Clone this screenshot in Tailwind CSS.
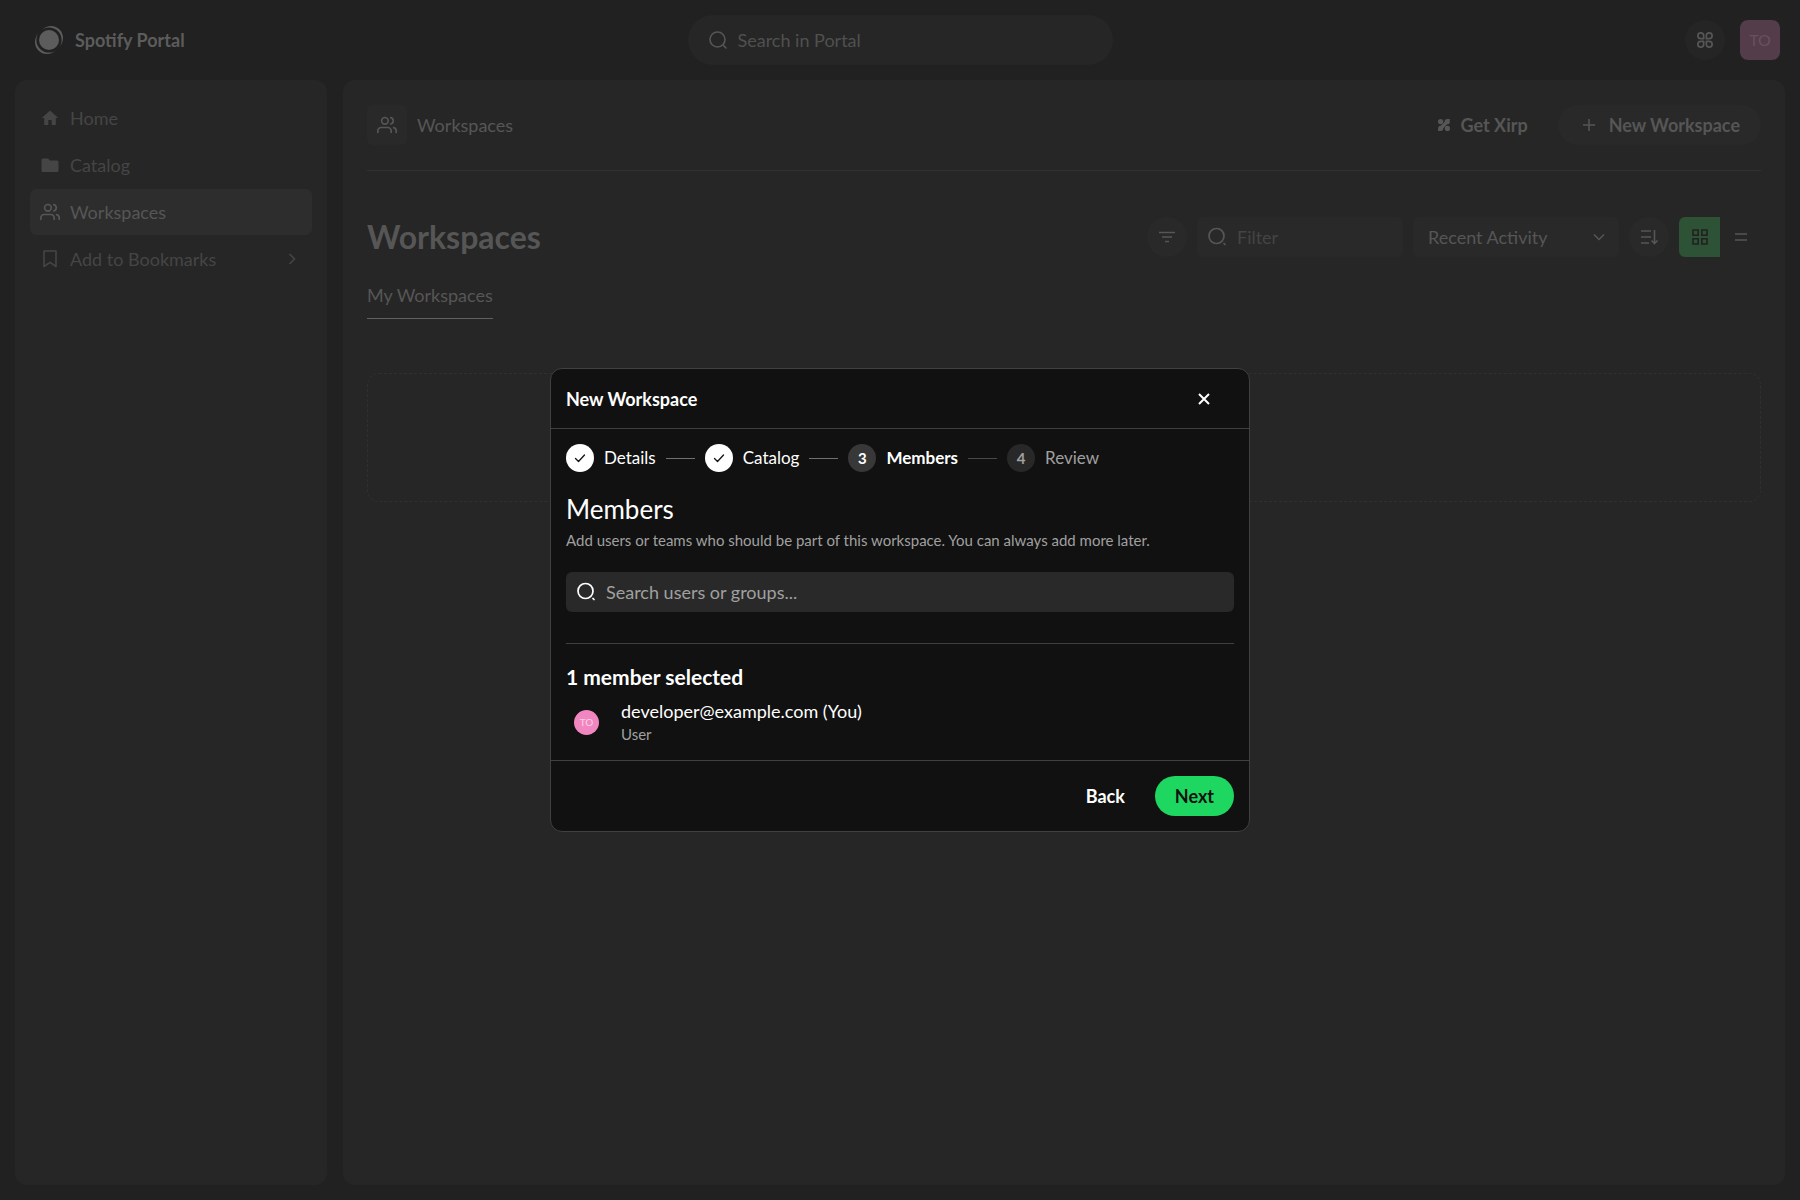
<!DOCTYPE html>
<html lang="en">
<head>
<meta charset="utf-8">
<meta name="viewport" content="width=device-width, initial-scale=1">
<title>Workspaces</title>
<script src="https://cdn.jsdelivr.net/npm/@tailwindcss/browser@4"></script>
</head>
<body class="flex min-h-screen flex-col bg-[#212121] font-['Lato',sans-serif] text-lg leading-6 text-[#565656]">
<svg class="hidden">
  <symbol id="users" viewBox="0 0 24 24" fill="none" stroke="currentColor" stroke-width="2" stroke-linecap="round" stroke-linejoin="round"><path d="M17 21v-2a4 4 0 0 0-4-4H5a4 4 0 0 0-4 4v2"/><circle cx="9.500" cy="7" r="4"/><path d="M23 21v-2a4 4 0 0 0-3-3.870M16.500 3.130a4 4 0 0 1 0 7.750"/></symbol>
  <symbol id="search" viewBox="0 0 20 20" fill="none" stroke="currentColor" stroke-width="1.700" stroke-linecap="round"><circle cx="9.500" cy="9" r="7.500"/><path d="M17 16.500l1 1"/></symbol>
  <symbol id="check" viewBox="0 0 14 14" fill="none" stroke="currentColor" stroke-width="1.300" stroke-linecap="round" stroke-linejoin="round"><path d="M2.500 7.500l3 3 6-6.500"/></symbol>
</svg>

<header class="grid h-20 grid-cols-[1fr_425px_1fr] items-center px-5">
  <a href="#" class="flex items-center gap-3 pl-[15px] font-bold text-[#5c5c5c]">
    <svg class="size-7" viewBox="0 0 28 28"><circle cx="16" cy="12" r="12" fill="#5c5c5c"/><circle cx="12" cy="16" r="12" fill="#5c5c5c"/><circle cx="14" cy="14" r="12.600" fill="#212121"/><circle cx="14" cy="14" r="10" fill="#5c5c5c"/></svg>
    <span>Spotify Portal</span>
  </a>
  <label class="flex h-[50px] items-center gap-2.5 rounded-full bg-[#262626] px-5">
    <svg class="size-5 shrink-0" viewBox="0 0 20 20" fill="none" stroke="currentColor" stroke-width="1.600" stroke-linecap="round"><circle cx="9.500" cy="9.500" r="7.500"/><path d="M15 15l3 3"/></svg>
    <input type="search" aria-label="Search in Portal" placeholder="Search in Portal" class="w-full bg-transparent outline-none placeholder:text-[#505050]">
  </label>
  <div class="flex items-center justify-end gap-[15px]">
    <button type="button" aria-label="Apps" class="grid size-10 place-items-center rounded-full bg-[#252525]">
      <svg class="size-[18px]" viewBox="0 0 20 20" fill="none" stroke="currentColor" stroke-width="1.900" stroke-linejoin="round"><path d="M8.500 8.500H5.300A3.200 3.200 0 1 1 8.500 5.300zM11.500 8.500h3.200A3.200 3.200 0 1 0 11.500 5.300zM8.500 11.500H5.300A3.200 3.200 0 1 0 8.500 14.700zM11.500 11.500h3.200A3.200 3.200 0 1 1 11.500 14.700z"/></svg>
    </button>
    <button type="button" aria-label="Account" class="size-10 rounded-lg bg-[#543c4b] text-base text-[#69505f]">TO</button>
  </div>
</header>

<div class="flex flex-1 gap-4 px-[15px] pb-[15px]">
  <nav class="flex w-[312px] shrink-0 flex-col gap-px rounded-xl bg-[#262626] px-[15px] pt-[15px] text-[#454545]">
    <a href="#" class="flex h-[46px] items-center gap-2.5 rounded-md px-2.5">
      <svg class="size-5" viewBox="0 0 20 20" fill="currentColor"><path d="M10 2.500L1.800 10h2.400v7h4.100v-5h3.400v5h4.100v-7h2.400z"/></svg>
      Home
    </a>
    <a href="#" class="flex h-[46px] items-center gap-2.5 rounded-md px-2.5">
      <svg class="size-5" viewBox="0 0 20 20" fill="currentColor"><path d="M3 3.500h5l2 2h7a1.500 1.500 0 0 1 1.500 1.500v8.500a1.500 1.500 0 0 1-1.500 1.500H3a1.500 1.500 0 0 1-1.500-1.500V5A1.500 1.500 0 0 1 3 3.500z"/></svg>
      Catalog
    </a>
    <a href="#" aria-current="page" class="flex h-[46px] items-center gap-2.5 rounded-md bg-[#2d2d2d] px-2.5 text-[#565656]">
      <svg class="size-5"><use href="#users"/></svg>
      Workspaces
    </a>
    <a href="#" class="flex h-[46px] items-center gap-2.5 rounded-md px-2.5">
      <svg class="size-5" viewBox="0 0 20 20" fill="none" stroke="currentColor" stroke-width="1.600" stroke-linejoin="round"><path d="M4 2h12v15.500l-6-4.200-6 4.200z"/></svg>
      Add to Bookmarks
      <svg class="ml-auto size-5" viewBox="0 0 20 20" fill="none" stroke="currentColor" stroke-width="1.600"><path d="M7.500 5l5 5-5 5"/></svg>
    </a>
  </nav>

  <main class="min-w-0 flex-1 rounded-xl bg-[#262626] px-6 pt-[25px]">
    <div class="flex items-center border-b border-[#313131] pb-[25px]">
      <span class="mr-2.5 grid size-10 place-items-center rounded-md bg-[#292929]"><svg class="size-5"><use href="#users"/></svg></span>
      <span>Workspaces</span>
      <button type="button" class="ml-auto flex h-10 items-center gap-2.5 px-[30px] font-bold">
        <svg class="size-[14px]" viewBox="0 0 14 14" fill="currentColor"><circle cx="3.600" cy="3.600" r="2.600"/><path d="M7.600 3.800A2.700 2.700 0 0 1 10.300 1.100h2.500v2.600a2.600 2.600 0 0 1-2.600 2.600L6.300 10.200a2.700 2.700 0 0 1-2.700 2.700H1.100v-2.600a2.600 2.600 0 0 1 2.600-2.600z"/><circle cx="10.400" cy="10.400" r="2.600"/></svg>
        Get Xirp
      </button>
      <button type="button" class="flex h-10 items-center gap-2.5 rounded-full bg-[#292929] px-[21px] font-bold">
        <svg class="size-5" viewBox="0 0 20 20" fill="none" stroke="currentColor" stroke-width="1.500"><path d="M10 4v12M4 10h12"/></svg>
        New Workspace
      </button>
    </div>

    <div class="mt-[46px] flex items-center gap-2.5">
      <h1 class="mr-auto text-[32px] leading-10 font-bold">Workspaces</h1>
      <button type="button" aria-label="Filters" class="grid size-10 place-items-center rounded-full bg-[#292929]">
        <svg class="size-5" viewBox="0 0 20 20" fill="none" stroke="currentColor" stroke-width="1.500"><path d="M2 5.500h16M5 10h10M8 14.500h4"/></svg>
      </button>
      <label class="flex h-10 w-[206px] items-center gap-2.5 rounded-md bg-[#292929] px-2.5">
        <svg class="size-5 shrink-0"><use href="#search"/></svg>
        <input type="text" aria-label="Filter" placeholder="Filter" class="w-full bg-transparent outline-none placeholder:text-[#444444]">
      </label>
      <div class="relative w-[206px]">
        <select aria-label="Sort by" class="h-10 w-full appearance-none rounded-md bg-[#292929] px-[15px]"><option>Recent Activity</option></select>
        <svg class="pointer-events-none absolute top-2.5 right-2.5 size-5" viewBox="0 0 20 20" fill="none" stroke="currentColor" stroke-width="1.500"><path d="M5 7.500l5 5 5-5"/></svg>
      </div>
      <button type="button" aria-label="Sort descending" class="grid size-10 place-items-center rounded-full bg-[#292929]">
        <svg class="size-5" viewBox="0 0 20 20" fill="none" stroke="currentColor" stroke-width="1.600"><path d="M2 4h10M2 10h10M2 16h8M15.500 3v13.500M12.500 13.500l3 3 3-3"/></svg>
      </button>
      <div class="flex">
        <button type="button" aria-label="Grid view" class="grid h-10 w-[41px] place-items-center rounded-l-md bg-[#2d5235] text-[#212121]">
          <svg class="size-5" viewBox="0 0 20 20" fill="none" stroke="currentColor" stroke-width="1.600"><path d="M3 3h5.200v5.200H3zM11.800 3H17v5.200h-5.200zM3 11.800h5.200V17H3zM11.800 11.800H17V17h-5.200z"/></svg>
        </button>
        <button type="button" aria-label="List view" class="grid h-10 w-[41px] place-items-center">
          <svg class="size-5" viewBox="0 0 20 20" fill="none" stroke="currentColor" stroke-width="1.700"><path d="M4 7h12M4 13h12"/></svg>
        </button>
      </div>
    </div>

    <div role="tablist" class="mt-[26px] flex">
      <button type="button" role="tab" aria-selected="true" class="border-b border-[#616161] pb-[11px]">My Workspaces</button>
    </div>
    <div class="mt-[54px] h-[129px] rounded-xl border border-dashed border-[#303030]"></div>
  </main>
</div>

<div class="fixed inset-0 grid place-items-center">
  <section role="dialog" aria-modal="true" aria-labelledby="dialog-title" class="w-full max-w-[700px] rounded-xl border border-[#404040] bg-[#111111] text-white">
    <header class="flex h-[60px] items-center justify-between border-b border-[#404040] px-[15px]">
      <h2 id="dialog-title" class="font-bold">New Workspace</h2>
      <button type="button" aria-label="Close" class="mr-2.5 grid size-10 place-items-center">
        <svg class="size-5" viewBox="0 0 20 20" fill="none" stroke="currentColor" stroke-width="2"><path d="M5 5l10 10M15 5L5 15"/></svg>
      </button>
    </header>
    <div class="px-[15px] py-[15px]">
      <ol class="flex items-center gap-2.5 text-[17px]">
        <li class="flex items-center gap-2.5"><span class="grid size-7 place-items-center rounded-full bg-white text-[#111111]"><svg class="size-[14px]"><use href="#check"/></svg></span>Details</li>
        <li aria-hidden="true" class="h-px w-[29px] bg-[#707070]"></li>
        <li class="flex items-center gap-2.5"><span class="grid size-7 place-items-center rounded-full bg-white text-[#111111]"><svg class="size-[14px]"><use href="#check"/></svg></span>Catalog</li>
        <li aria-hidden="true" class="h-px w-[29px] bg-[#707070]"></li>
        <li aria-current="step" class="flex items-center gap-2.5 font-bold"><span class="grid size-7 place-items-center rounded-full bg-[#383838] text-[15px]">3</span>Members</li>
        <li aria-hidden="true" class="h-px w-[29px] bg-[#484848]"></li>
        <li class="flex items-center gap-2.5 text-[#a0a0a0]"><span class="grid size-7 place-items-center rounded-full bg-[#282828] text-[15px] font-bold">4</span>Review</li>
      </ol>
      <h3 class="mt-[22px] text-[26px] leading-[30px]">Members</h3>
      <p class="mt-1 text-[15px] leading-6 text-[#a0a0a0]">Add users or teams who should be part of this workspace. You can always add more later.</p>
      <label class="mt-5 flex h-10 items-center gap-2.5 rounded-md bg-[#292929] px-2.5">
        <svg class="size-5 shrink-0"><use href="#search"/></svg>
        <input type="text" aria-label="Search users or groups" placeholder="Search users or groups..." class="w-full bg-transparent outline-none placeholder:text-[#a0a0a0]">
      </label>
      <hr class="mt-[31px] border-[#404040]">
      <h4 class="mt-[19px] text-[21px] leading-7 font-bold">1 member selected</h4>
      <div class="mt-2 flex items-center gap-[22px] pl-2">
        <span class="grid size-[25px] place-items-center rounded-full bg-[#f286c0] text-[10px] leading-3 text-[#fbd3e8]">TO</span>
        <div>
          <p>developer@example.com (You)</p>
          <p class="text-[15px] leading-[22px] text-[#a0a0a0]">User</p>
        </div>
      </div>
    </div>
    <footer class="flex justify-end gap-2.5 border-t border-[#404040] p-[15px] font-bold">
      <button type="button" class="h-10 px-5">Back</button>
      <button type="button" class="h-10 rounded-full bg-[#1ed760] px-5 text-[#111111]">Next</button>
    </footer>
  </section>
</div>
</body>
</html>
